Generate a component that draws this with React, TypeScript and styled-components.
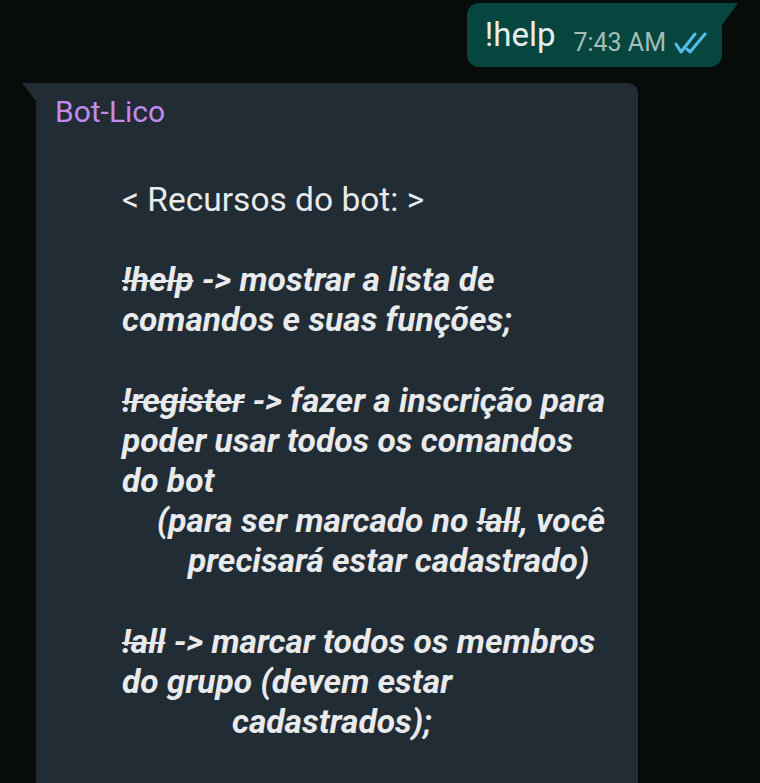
import React from "react";
import styled, { createGlobalStyle } from "styled-components";

const Global = createGlobalStyle`
  html, body { margin: 0; padding: 0; background: #070c0a; }
  body { width: 760px; height: 783px; overflow: hidden; font-family: Roboto, "Liberation Sans", sans-serif; }
`;

const Page = styled.div`
  display: flex;
  flex-direction: column;
  padding-top: 3px;
`;

const OutRow = styled.div`
  display: flex;
  justify-content: flex-end;
  padding-right: 38px;
`;

const OutBubble = styled.div`
  position: relative;
  display: flex;
  align-items: flex-end;
  gap: 18px;
  height: 64px;
  box-sizing: border-box;
  padding: 13px 14px 0 18px;
  background: #07463f;
  border-radius: 0 0 12px 12px;
  border-top-left-radius: 12px;
  &::after {
    content: "";
    position: absolute;
    top: 0;
    right: -16px;
    width: 16px;
    height: 22px;
    background: #07463f;
    clip-path: polygon(0 0, 100% 0, 0 100%);
  }
`;

const OutText = styled.span`
  font-size: 33px;
  color: #e8ecea;
  line-height: 38px;
  align-self: flex-start;
`;

const Meta = styled.span`
  display: flex;
  align-items: center;
  gap: 8px;
  font-size: 25px;
  color: #a3bdb9;
  padding-bottom: 10px;
`;

const InRow = styled.div`
  display: flex;
  padding-left: 36px;
  margin-top: 16px;
`;

const InBubble = styled.div`
  position: relative;
  width: 602px;
  box-sizing: border-box;
  padding: 12px 0 200px 19px;
  background: #212c34;
  border-radius: 0 10px 0 0;
  &::before {
    content: "";
    position: absolute;
    top: 0;
    left: -14px;
    width: 14px;
    height: 18px;
    background: #212c34;
    clip-path: polygon(0 0, 100% 0, 100% 100%);
  }
`;

const Sender = styled.div`
  font-size: 30px;
  line-height: 34px;
  color: #c38aed;
`;

const Body = styled.div`
  margin-top: 51px;
  padding-left: 67px;
  color: #e8eaec;
`;

const Line = styled.div<{ $indent?: number; $plain?: boolean }>`
  height: 40.15px;
  line-height: 40.15px;
  white-space: pre;
  padding-left: ${(p) => p.$indent ?? 0}px;
  font-size: 33.5px;
  font-weight: ${(p) => (p.$plain ? 400 : 700)};
  font-style: ${(p) => (p.$plain ? "normal" : "italic")};
`;

const Strike = styled.s`
  text-decoration-thickness: 2px;
`;

const Ticks = () => (
  <svg width="34" height="22" viewBox="0 0 34 22" fill="none" stroke="#53bdeb" strokeWidth="3" strokeLinecap="round" strokeLinejoin="round">
    <path d="M2 12 L7 20 L21 2" />
    <path d="M13 17 L16 20 L31 2" />
  </svg>
);

export default function App() {
  return (
    <>
      <Global />
      <Page>
        <OutRow>
          <OutBubble>
            <OutText>!help</OutText>
            <Meta>
              7:43 AM
              <Ticks />
            </Meta>
          </OutBubble>
        </OutRow>
        <InRow>
          <InBubble>
            <Sender>Bot-Lico</Sender>
            <Body>
              <Line $plain>{"< Recursos do bot: >"}</Line>
              <Line />
              <Line><Strike>!help</Strike>{" -> mostrar a lista de"}</Line>
              <Line>comandos e suas funções;</Line>
              <Line />
              <Line><Strike>!register</Strike>{" -> fazer a inscrição para"}</Line>
              <Line>poder usar todos os comandos</Line>
              <Line>do bot</Line>
              <Line $indent={35}>(para ser marcado no <Strike>!all</Strike>, você</Line>
              <Line $indent={66}>precisará estar cadastrado)</Line>
              <Line />
              <Line><Strike>!all</Strike>{" -> marcar todos os membros"}</Line>
              <Line>do grupo (devem estar</Line>
              <Line $indent={110}>cadastrados);</Line>
            </Body>
          </InBubble>
        </InRow>
      </Page>
    </>
  );
}
